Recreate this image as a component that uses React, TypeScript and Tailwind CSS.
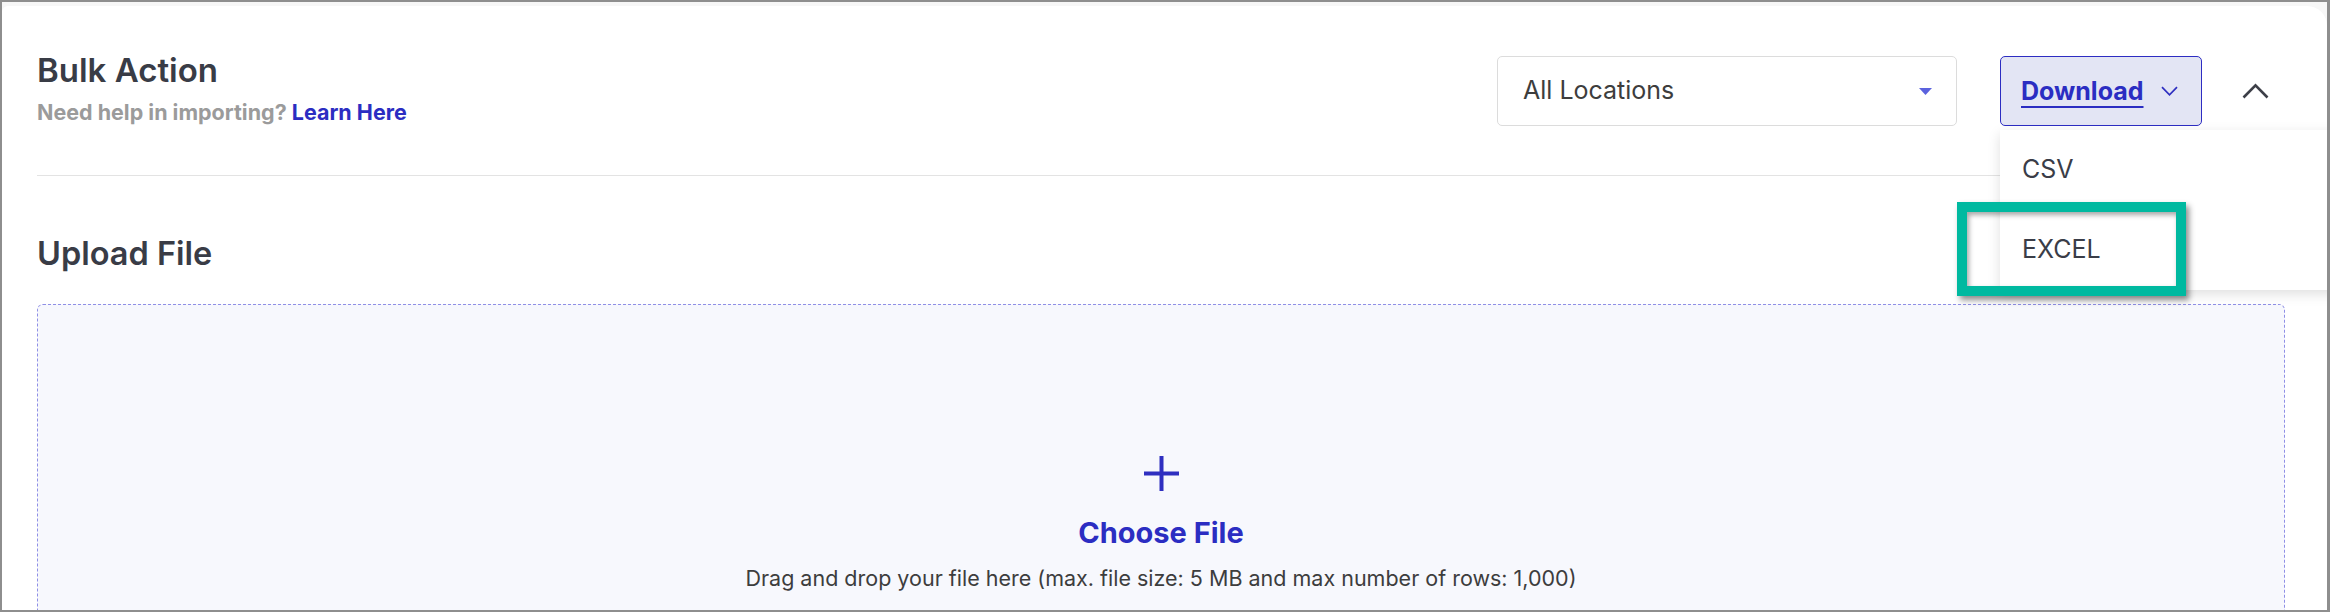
import { useState } from "react";

function Caret() {
  return (
    <svg width="13" height="7" viewBox="0 0 13 7" aria-hidden>
      <path d="M0 0h13L6.5 7z" fill="#5b62de" />
    </svg>
  );
}

function ChevronDownThin() {
  return (
    <svg width="17" height="10" viewBox="0 0 17 10" fill="none" aria-hidden>
      <path d="M1 1.2l7.5 7.6L16 1.2" stroke="#2f2fc0" strokeWidth="1.7" />
    </svg>
  );
}

function ChevronUpBold() {
  return (
    <svg width="27" height="16" viewBox="0 0 27 16" fill="none" aria-hidden>
      <path d="M1.5 14.5L13.5 2.3l12 12.2" stroke="#3d3f48" strokeWidth="2.6" />
    </svg>
  );
}

function Plus() {
  return (
    <svg width="35" height="35" viewBox="0 0 35 35" aria-hidden>
      <path d="M17.5 0v35M0 17.5h35" stroke="#2f2fc0" strokeWidth="4" />
    </svg>
  );
}

export default function App() {
  const [open] = useState(true);

  return (
    <div className="h-[612px] w-[2330px] overflow-hidden border-2 border-r-[3px] border-[#8e8e8e] bg-[#f7f7f7] pt-[4px] font-['Inter',sans-serif]">
      <div className="h-full rounded-tl-[6px] rounded-tr-[20px] bg-white pl-[35px] pr-[42px]">
        <header className="flex items-start justify-between pt-[44px]">
          <div>
            <h1 className="text-[33px] font-semibold leading-[40px] text-[#393c46]">
              Bulk Action
            </h1>
            <p className="mt-[10px] text-[21.5px] font-bold leading-[25px] text-[#9b9b9b]">
              Need help in importing?{" "}
              <a className="cursor-pointer text-[#2b2dc2]">Learn Here</a>
            </p>
          </div>

          <div className="mt-[6px] flex items-center">
            <button className="flex h-[70px] w-[460px] items-center justify-between rounded-[5px] border border-[#dcdcdc] bg-white pl-[25px] pr-[24px] text-[25px] text-[#3d3d3d]">
              All Locations
              <Caret />
            </button>

            <div className="relative ml-[43px]">
              <button className="flex h-[70px] w-[202px] items-center justify-between rounded-[5px] border-[1.5px] border-[#2d2dc2] bg-[#e3e5f4] pl-[20px] pr-[23px]">
                <span className="text-[25px] font-bold leading-none text-[#2b2dc2] underline decoration-2 underline-offset-[6px]">
                  Download
                </span>
                <ChevronDownThin />
              </button>

              {open ? (
                <div className="absolute left-0 top-[74px] z-10 w-[340px]">
                  <ul className="bg-white shadow-[0_4px_12px_rgba(0,0,0,0.13)]">
                    <li className="flex h-[80px] items-center pl-[22px] text-[25px] text-[#3a3d48]">
                      CSV
                    </li>
                    <li className="flex h-[80px] items-center pl-[22px] text-[25px] text-[#3a3d48]">
                      EXCEL
                    </li>
                  </ul>
                  <div className="pointer-events-none absolute left-[-43px] top-[72px] h-[94px] w-[229px] border-[10px] border-[#00b9a0] shadow-[3px_4px_6px_rgba(0,0,0,0.45),inset_2px_3px_5px_rgba(0,0,0,0.35)]" />
                </div>
              ) : null}
            </div>

            <button className="ml-[23px] flex h-[70px] w-[60px] items-center justify-center">
              <ChevronUpBold />
            </button>
          </div>
        </header>

        <div className="mt-[49px] h-px bg-[#e3e3e3]" />

        <h2 className="mt-[58px] text-[32.5px] font-semibold leading-[40px] text-[#393c46]">
          Upload File
        </h2>

        <div className="mt-[30px] flex flex-col items-center rounded-[6px] border border-dashed border-[#8f8fe6] bg-[#f7f8fd] pb-[200px] pt-[151px]">
          <Plus />
          <p className="mt-[25px] text-[29px] font-bold leading-[34px] text-[#2b2dc2]">
            Choose File
          </p>
          <p className="mt-[15px] text-[21.5px] leading-[26px] text-[#3d3d3d]">
            Drag and drop your file here (max. file size: 5 MB and max number of
            rows: 1,000)
          </p>
        </div>
      </div>
    </div>
  );
}
